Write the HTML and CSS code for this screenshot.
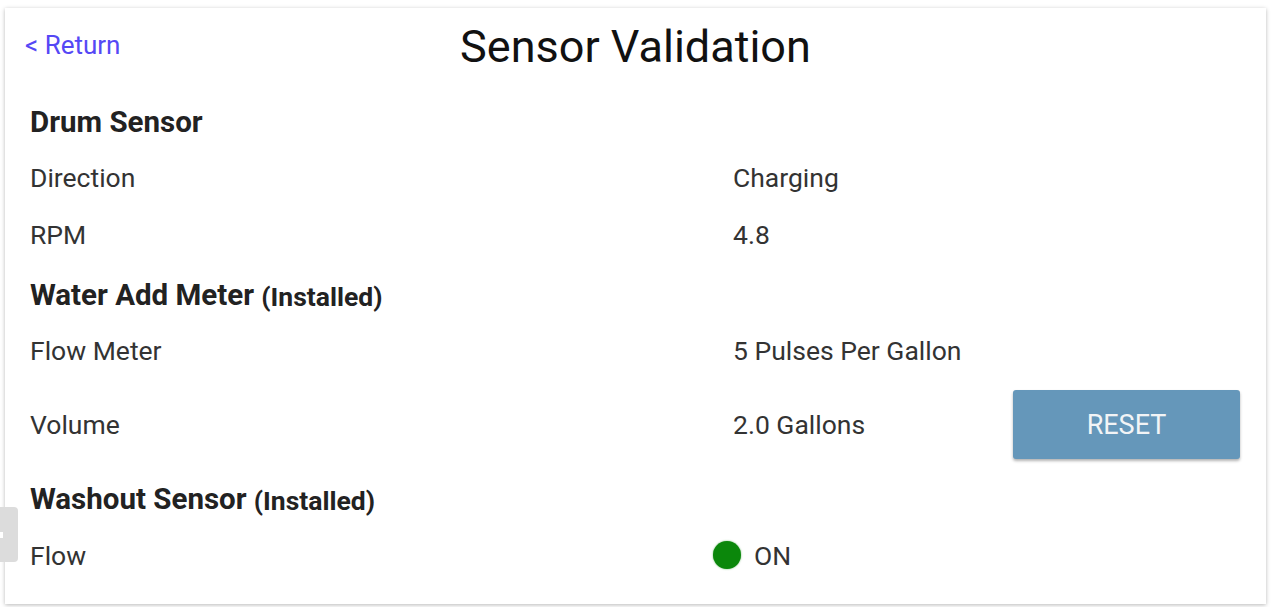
FILE: index.html
```html
<!DOCTYPE html>
<html lang="en">
<head>
<meta charset="UTF-8" />
<title>Sensor Validation</title>
<link rel="stylesheet" href="styles.css">
</head>
<body>
  <div class="side-tab"><span class="side-notch"></span></div>

  <div class="card">
    <div class="header">
      <a class="return" href="#">&lt; Return</a>
      <h1>Sensor Validation</h1>
      <span></span>
    </div>

    <h2 class="section first">Drum Sensor</h2>
    <div class="row">
      <span class="label">Direction</span>
      <span class="value">Charging</span>
    </div>
    <div class="row">
      <span class="label">RPM</span>
      <span class="value">4.8</span>
    </div>

    <h2 class="section">Water Add Meter&nbsp;<small>(Installed)</small></h2>
    <div class="row short">
      <span class="label">Flow Meter</span>
      <span class="value">5 Pulses Per Gallon</span>
    </div>
    <div class="row tall">
      <span class="label">Volume</span>
      <span class="value">2.0 Gallons</span>
      <button class="reset">RESET</button>
    </div>

    <h2 class="section tight">Washout Sensor&nbsp;<small>(Installed)</small></h2>
    <div class="row last">
      <span class="label">Flow</span>
      <span class="value status"><span class="dot"></span>ON</span>
    </div>
  </div>
</body>
</html>
```

FILE: styles.css
```css
body {
  margin: 0;
  padding: 8px 9px 3px 5px;
  background: #fff;
  font-family: Roboto, "Liberation Sans", sans-serif;
}
.card {
  background: #fff;
  height: 596px;
  box-sizing: border-box;
  padding: 0 20px;
  box-shadow: 0 1px 4px rgba(0,0,0,0.28);
}
.header {
  display: grid;
  grid-template-columns: 1fr auto 1fr;
  align-items: center;
  height: 76px;
}
.return {
  color: #5548f5;
  font-size: 26px;
  text-decoration: none;
  padding-bottom: 2px;
}
h1 {
  margin: 0;
  font-size: 45px;
  font-weight: 400;
  color: #111;
}
.section {
  display: flex;
  align-items: center;
  margin: 0;
  padding-left: 5px;
  height: 62px;
  font-size: 29.5px;
  font-weight: 700;
  color: #222;
}
.section.first {
  height: 56px;
  padding-top: 10px;
}
.section.tight {
  height: 54px;
}
.section small {
  font-size: 26.5px;
  margin-top: 2px;
}
.row {
  display: grid;
  grid-template-columns: 703px 280px 227px;
  align-items: center;
  box-sizing: border-box;
  height: 57px;
  padding: 0 0 2px 5px;
  font-size: 26.5px;
  color: #333;
}
.row.short {
  height: 50px;
}
.row.tall {
  height: 96px;
  padding-bottom: 0;
}
.row.last {
  height: 60px;
}
.status {
  display: flex;
  align-items: center;
  margin-left: -20px;
}
.dot {
  width: 28px;
  height: 28px;
  border-radius: 50%;
  background: #0b870b;
  box-shadow: 0 0 2px rgba(11,135,11,0.6);
  margin-right: 13px;
}
.reset {
  height: 69px;
  background: #6597ba;
  color: #f2f4f6;
  border: none;
  border-radius: 3px;
  font-family: inherit;
  font-size: 27px;
  box-shadow: 0 2px 3px rgba(0,0,0,0.3);
  margin-top: 1px;
}
.side-tab {
  position: absolute;
  left: 0;
  top: 507px;
  width: 18px;
  height: 55px;
  background: #dcdcdc;
  border-radius: 0 4px 4px 0;
}
.side-notch {
  position: absolute;
  left: 0;
  top: 25px;
  width: 3px;
  height: 6px;
  background: #fff;
}
```
